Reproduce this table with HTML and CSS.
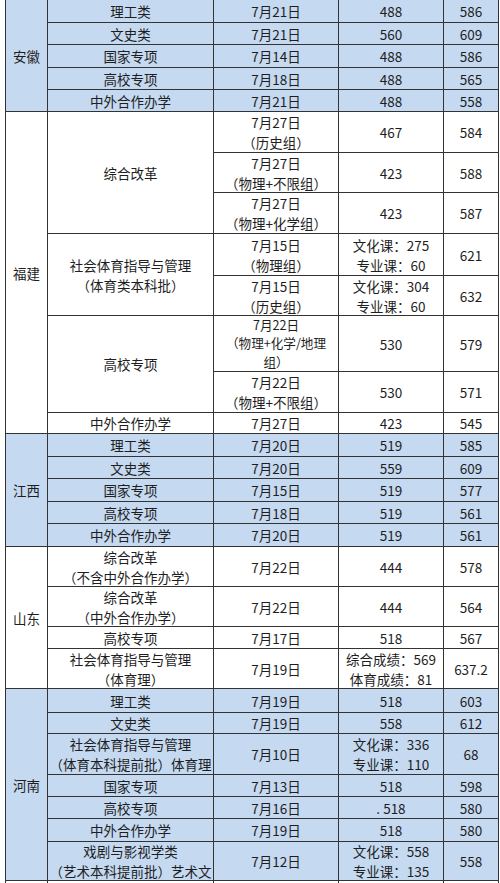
FILE: index.html
```html
<!DOCTYPE html>
<html lang="zh-CN">
<head>
<meta charset="utf-8">
<title>录取分数表</title>
<link rel="stylesheet" href="styles.css">
</head>
<body>
<div class="sheet">
  <div class="grid">
    <div class="grp blue">
      <div class="c s5">安徽</div>
      <div class="c">理工类</div><div class="c">7月21日</div><div class="c">488</div><div class="c">586</div>
      <div class="c">文史类</div><div class="c">7月21日</div><div class="c">560</div><div class="c">609</div>
      <div class="c">国家专项</div><div class="c">7月14日</div><div class="c">488</div><div class="c">586</div>
      <div class="c">高校专项</div><div class="c">7月18日</div><div class="c">488</div><div class="c">565</div>
      <div class="c">中外合作办学</div><div class="c">7月21日</div><div class="c">488</div><div class="c">558</div>
    </div>
    <div class="grp white">
      <div class="c s8">福建</div>
      <div class="c s3">综合改革</div><div class="c"><span>7月27日</span><span>（历史组）</span></div><div class="c">467</div><div class="c">584</div>
      <div class="c"><span>7月27日</span><span>（物理+不限组）</span></div><div class="c">423</div><div class="c">588</div>
      <div class="c"><span>7月27日</span><span>（物理+化学组）</span></div><div class="c">423</div><div class="c">587</div>
      <div class="c s2"><span>社会体育指导与管理</span><span>（体育类本科批）</span></div><div class="c"><span>7月15日</span><span>（物理组）</span></div><div class="c"><span>文化课：275</span><span>专业课：60</span></div><div class="c">621</div>
      <div class="c"><span>7月15日</span><span>（历史组）</span></div><div class="c"><span>文化课：304</span><span>专业课：60</span></div><div class="c">632</div>
      <div class="c s2">高校专项</div><div class="c tight"><span>7月22日</span><span>（物理+化学/地理</span><span>组）</span></div><div class="c">530</div><div class="c">579</div>
      <div class="c"><span>7月22日</span><span>（物理+不限组）</span></div><div class="c">530</div><div class="c">571</div>
      <div class="c">中外合作办学</div><div class="c">7月27日</div><div class="c">423</div><div class="c">545</div>
    </div>
    <div class="grp blue">
      <div class="c s5">江西</div>
      <div class="c">理工类</div><div class="c">7月20日</div><div class="c">519</div><div class="c">585</div>
      <div class="c">文史类</div><div class="c">7月20日</div><div class="c">559</div><div class="c">609</div>
      <div class="c">国家专项</div><div class="c">7月15日</div><div class="c">519</div><div class="c">577</div>
      <div class="c">高校专项</div><div class="c">7月18日</div><div class="c">519</div><div class="c">561</div>
      <div class="c">中外合作办学</div><div class="c">7月20日</div><div class="c">519</div><div class="c">561</div>
    </div>
    <div class="grp white">
      <div class="c s4">山东</div>
      <div class="c"><span>综合改革</span><span>（不含中外合作办学）</span></div><div class="c">7月22日</div><div class="c">444</div><div class="c">578</div>
      <div class="c"><span>综合改革</span><span>（中外合作办学）</span></div><div class="c">7月22日</div><div class="c">444</div><div class="c">564</div>
      <div class="c">高校专项</div><div class="c">7月17日</div><div class="c">518</div><div class="c">567</div>
      <div class="c"><span>社会体育指导与管理</span><span>（体育理）</span></div><div class="c">7月19日</div><div class="c"><span>综合成绩：569</span><span>体育成绩：81</span></div><div class="c">637.2</div>
    </div>
    <div class="grp blue">
      <div class="c s7">河南</div>
      <div class="c">理工类</div><div class="c">7月19日</div><div class="c">518</div><div class="c">603</div>
      <div class="c">文史类</div><div class="c">7月19日</div><div class="c">558</div><div class="c">612</div>
      <div class="c"><span>社会体育指导与管理</span><span>（体育本科提前批）体育理</span></div><div class="c">7月10日</div><div class="c"><span>文化课：336</span><span>专业课：110</span></div><div class="c">68</div>
      <div class="c">国家专项</div><div class="c">7月13日</div><div class="c">518</div><div class="c">598</div>
      <div class="c">高校专项</div><div class="c">7月16日</div><div class="c">. 518</div><div class="c">580</div>
      <div class="c">中外合作办学</div><div class="c">7月19日</div><div class="c">518</div><div class="c">580</div>
      <div class="c"><span>戏剧与影视学类</span><span>（艺术本科提前批）艺术文</span></div><div class="c">7月12日</div><div class="c"><span>文化课：558</span><span>专业课：135</span></div><div class="c">558</div>
    </div>
    <div class="grp white">
      <div class="c"></div><div class="c"></div><div class="c"></div><div class="c"></div><div class="c"></div>
    </div>
  </div>
</div>
</body>
</html>
```

FILE: styles.css
```css
html, body {
  margin: 0;
  padding: 0;
  background: #ffffff;
}

body {
  font-family: "Noto Sans CJK SC", "Noto Sans", sans-serif;
  font-size: 13.5px;
  color: #1e1e1e;
}

.sheet {
  padding-left: 5px;
}

.grid {
  display: grid;
  width: max-content;
  grid-template-columns: 42px 166px 125px 105px 55px;
  grid-template-rows:
    23px 22px 23px 22px 22px
    41px 40px 41px 42px 40px 56px 41px 21px
    23px 22px 23px 22px 23px
    40px 40px 22px 40px
    24px 21px 41px 22px 22px 23px 39px
    20px;
  border-left: 1px solid #333333;
}

.grp {
  display: contents;
}

.c {
  box-sizing: border-box;
  display: flex;
  flex-direction: column;
  align-items: center;
  justify-content: center;
  text-align: center;
  line-height: 20px;
  border-right: 1px solid #333333;
  border-bottom: 1px solid #333333;
  overflow: hidden;
}

.blue > .c {
  background: #c5d9f1;
}

.white > .c {
  background: #ffffff;
}

.tight {
  font-size: 12.6px;
  line-height: 18.3px;
}

.s2 { grid-row: span 2; }
.s3 { grid-row: span 3; }
.s4 { grid-row: span 4; }
.s5 { grid-row: span 5; }
.s7 { grid-row: span 7; }
.s8 { grid-row: span 8; }
```
